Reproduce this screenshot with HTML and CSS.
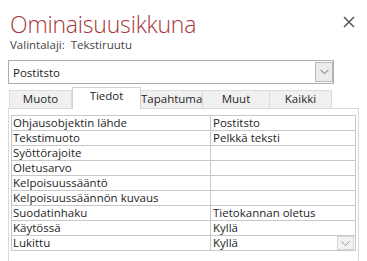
FILE: index.html
```html
<!DOCTYPE html>
<html lang="fi">
<head>
<meta charset="utf-8">
<title>Ominaisuusikkuna</title>
<link rel="stylesheet" href="styles.css">
</head>
<body>
<div class="window">
  <div class="header">
    <h1 class="title">Ominaisuusikkuna</h1>
    <svg class="close" width="12" height="12" viewBox="0 0 12 12" aria-label="Sulje">
      <path d="M1 1 L11 11 M11 1 L1 11" stroke="#5a5a5a" stroke-width="1.6" fill="none"/>
    </svg>
  </div>
  <div class="subtitle">Valintalaji:&nbsp; Tekstiruutu</div>
  <div class="combo">
    <span class="combo-text">Postitsto</span>
    <span class="dd-btn">
      <svg width="9" height="6" viewBox="0 0 9 6"><path d="M0.5 0.8 L4.5 4.8 L8.5 0.8" stroke="#6a6a6a" stroke-width="1" fill="none"/></svg>
    </span>
  </div>
  <div class="tabs">
    <div class="tab tab-muoto">Muoto</div>
    <div class="tab tab-active">Tiedot</div>
    <div class="tab tab-tapahtuma">Tapahtuma</div>
    <div class="tab tab-muut">Muut</div>
    <div class="tab tab-kaikki">Kaikki</div>
  </div>
  <div class="panel">
    <div class="props">
      <div class="cell name">Ohjausobjektin lähde</div><div class="cell value">Postitsto</div>
      <div class="cell name">Tekstimuoto</div><div class="cell value">Pelkkä teksti</div>
      <div class="cell name">Syöttörajoite</div><div class="cell value"></div>
      <div class="cell name">Oletusarvo</div><div class="cell value"></div>
      <div class="cell name">Kelpoisuussääntö</div><div class="cell value"></div>
      <div class="cell name">Kelpoisuussäännön kuvaus</div><div class="cell value"></div>
      <div class="cell name">Suodatinhaku</div><div class="cell value">Tietokannan oletus</div>
      <div class="cell name">Käytössä</div><div class="cell value">Kyllä</div>
      <div class="cell name">Lukittu</div><div class="cell value with-btn"><span>Kyllä</span><span class="cell-btn"><svg width="9" height="5" viewBox="0 0 9 5"><path d="M0.5 0.5 L4.5 4.3 L8.5 0.5" stroke="#9a9a9a" stroke-width="1" fill="none"/></svg></span></div>
    </div>
  </div>
</div>
</body>
</html>
```
FILE: styles.css
```css
body {
  margin: 0;
  background: #ffffff;
  font-family: "Open Sans", "Noto Sans", sans-serif;
  color: #1e1e1e;
}

.window {
  width: 367px;
  height: 261px;
  overflow: hidden;
  padding-left: 8px;
  box-sizing: border-box;
}

.header {
  display: flex;
  justify-content: space-between;
  align-items: flex-start;
  padding-top: 12px;
}

.title {
  margin: 0 0 0 2px;
  font-size: 23px;
  font-weight: 300;
  line-height: 24px;
  color: #a4373a;
  letter-spacing: -0.2px;
}

.close {
  margin: 4px 12px 0 0;
  display: block;
}

.subtitle {
  margin: 1px 0 0 2px;
  font-size: 11.5px;
  line-height: 16px;
  color: #444444;
}

.combo {
  margin-top: 7px;
  width: 326px;
  height: 24px;
  box-sizing: border-box;
  border: 1px solid #abadb3;
  display: flex;
  align-items: center;
  justify-content: space-between;
  padding-left: 4px;
  font-size: 11.5px;
}

.dd-btn {
  width: 18px;
  height: 20px;
  box-sizing: border-box;
  border: 1px solid #b9b9b9;
  background: #ececec;
  display: flex;
  align-items: center;
  justify-content: center;
}

.tabs {
  margin-top: 3px;
  width: 351px;
  box-sizing: border-box;
  padding-left: 1px;
  display: flex;
  align-items: flex-end;
  border-bottom: 1px solid #d9d9d9;
}

.tab {
  box-sizing: border-box;
  height: 18px;
  background: #f0f0f0;
  border-top: 1px solid #dcdcdc;
  border-right: 1px solid #dcdcdc;
  font-size: 11.5px;
  line-height: 15px;
  text-align: center;
  color: #262626;
  white-space: nowrap;
}

.tab-muoto { width: 63px; border-left: 1px solid #dcdcdc; }
.tab-tapahtuma { width: 62px; }
.tab-muut { width: 67px; }
.tab-kaikki { width: 62px; }

.tab-active {
  width: 69px;
  height: 22px;
  margin-bottom: -1px;
  background: #ffffff;
  border: 1px solid #d4d4d4;
  border-bottom: none;
}

.panel {
  width: 351px;
  height: 160px;
  box-sizing: border-box;
  border-left: 1px solid #d9d9d9;
  border-right: 1px solid #d9d9d9;
  padding: 6px 2px 0 2px;
}

.props {
  display: grid;
  grid-template-columns: 199px 145px;
  border-top: 1px solid #c8c8c8;
  border-left: 1px solid #c8c8c8;
  font-size: 11.5px;
  line-height: 14px;
}

.cell {
  height: 15px;
  box-sizing: border-box;
  border-right: 1px solid #c8c8c8;
  border-bottom: 1px solid #c8c8c8;
  white-space: nowrap;
}

.name { padding-left: 1px; }
.value { padding-left: 2px; }

.with-btn {
  display: flex;
  justify-content: space-between;
  align-items: flex-start;
  padding-right: 1px;
}

.cell-btn {
  width: 17px;
  height: 14px;
  box-sizing: border-box;
  border: 1px solid #d6d6d6;
  background: #f2f2f2;
  display: flex;
  align-items: center;
  justify-content: center;
}
```
